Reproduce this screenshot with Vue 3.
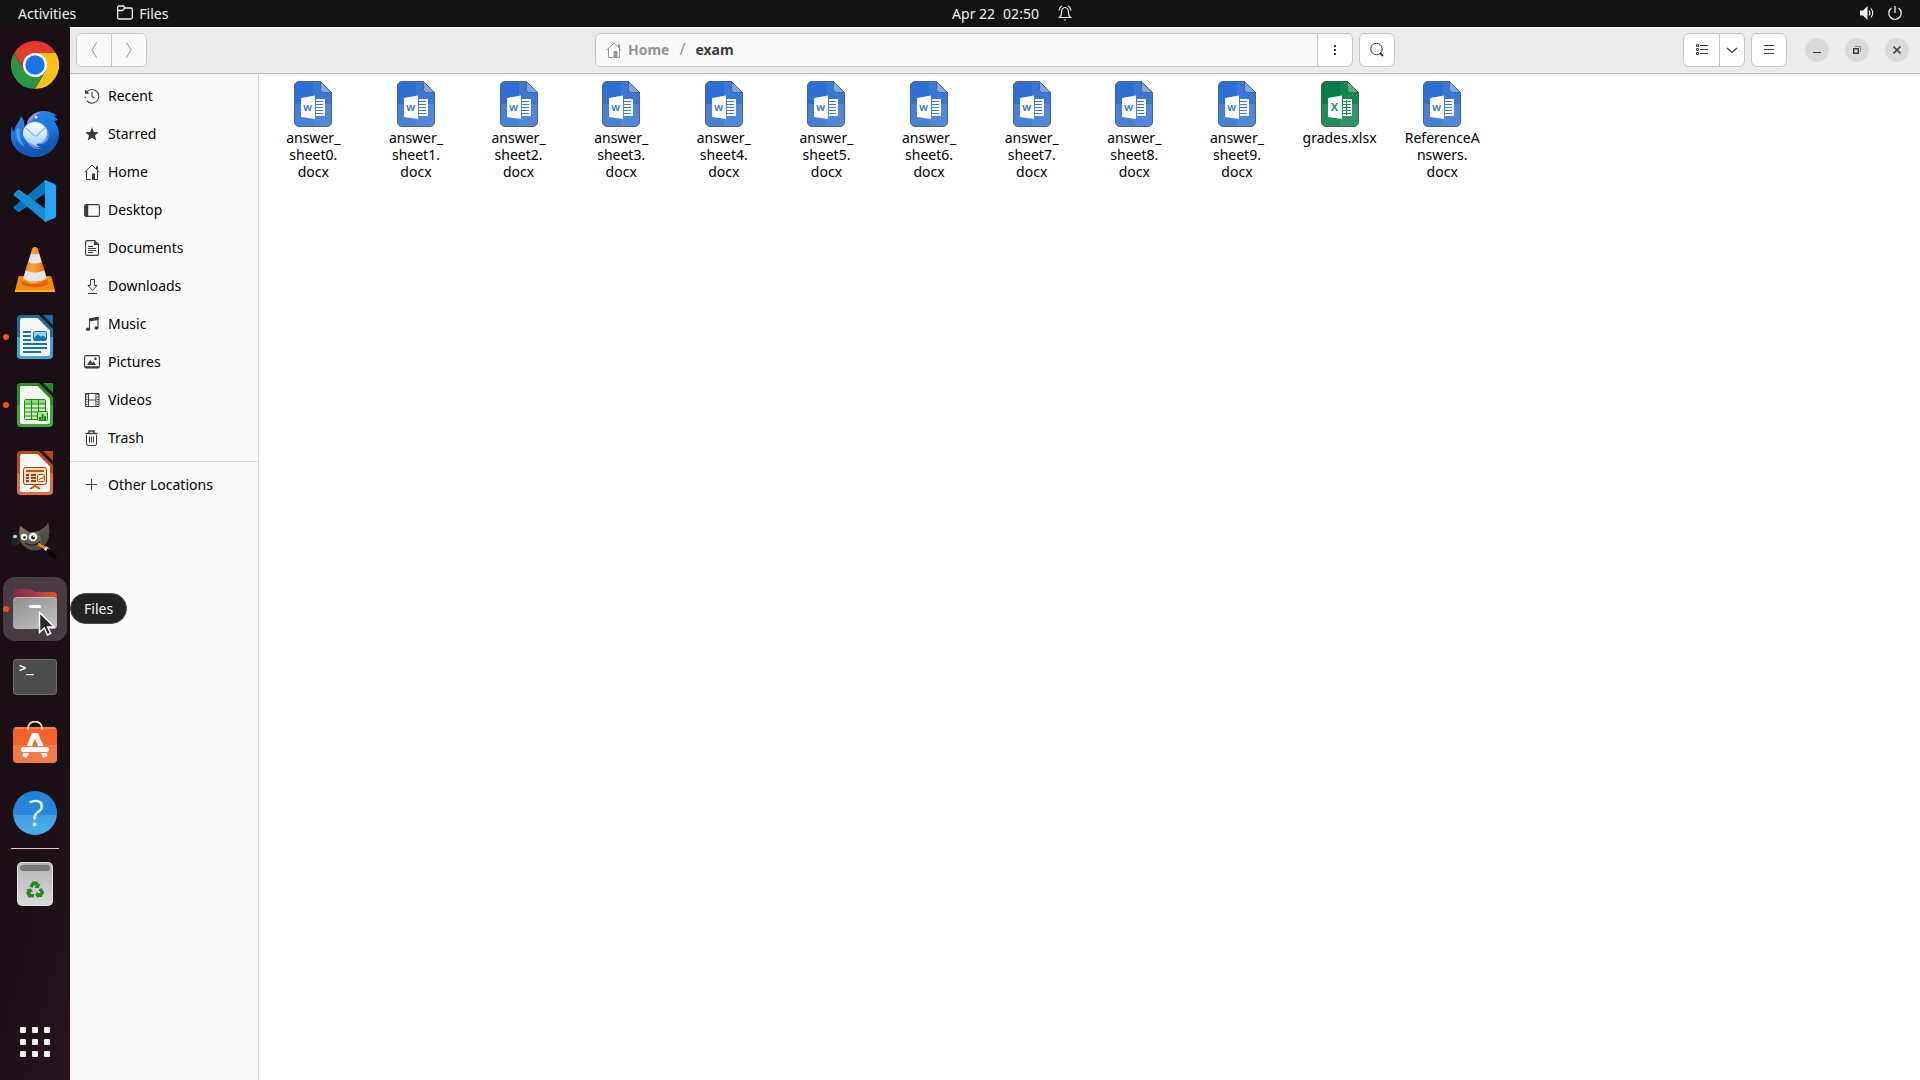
<script setup>
const places = [
  { name: 'Recent', icon: '<path d="M2.6 4.2A6.8 6.8 0 1 1 1.2 8.600" fill="none" stroke="currentColor" stroke-width="1.1" stroke-dasharray="33 3"/><path d="M1 1.500v4.300h4.300z" fill="currentColor"/><path d="M8 4v4.500l2.300 1.800" fill="none" stroke="currentColor" stroke-width="1.100"/>' },
  { name: 'Starred', icon: '<path d="M8 1.200l1.900 4.700 5 .3-3.900 3.200 1.300 5L8 11.700l-4.300 2.700 1.300-5L1.100 6.200l5-.3z" fill="currentColor"/>' },
  { name: 'Home', icon: '<path d="M.6 8.200L8 1l7.400 7.200M2.500 7v8.500h4.200M9.500 15.500h4V7M12.500 5V2.500h1V6" fill="none" stroke="currentColor"/><path d="M8 9.500h3V16H8z" fill="currentColor"/>' },
  { name: 'Desktop', icon: '<rect x=".6" y="2.600" width="14.800" height="11.800" rx="1.500" fill="none" stroke="currentColor" stroke-width="1.100"/><path d="M1 3h3.200v11H1z" fill="currentColor"/>' },
  { name: 'Documents', icon: '<path d="M3 .6h7.500l4 4V14a1.400 1.400 0 0 1-1.400 1.400H3A1.400 1.400 0 0 1 1.600 14V2A1.400 1.400 0 0 1 3 .6z" fill="none" stroke="currentColor" stroke-width="1.100"/><path d="M10 .5V5h4.500z" fill="currentColor"/><path d="M4 6.500h5M4 8.500h8M4 10.500h8M4 12.500h5" stroke="currentColor"/>' },
  { name: 'Downloads', icon: '<path d="M6.500 1.500h4v6H13L8.500 12.300 4 7.500h2.500zM4 15.500h9" fill="none" stroke="currentColor"/>' },
  { name: 'Music', icon: '<path d="M5.500 13V3.200L14 1.500v10.200" fill="none" stroke="currentColor" stroke-width="1.100"/><path d="M5 2.600L14.500 1v3L5 5.600z" fill="currentColor"/><ellipse cx="4" cy="13.300" rx="2.100" ry="1.800" fill="currentColor"/><ellipse cx="12.500" cy="12" rx="2.100" ry="1.800" fill="currentColor"/>' },
  { name: 'Pictures', icon: '<rect x=".6" y="1.600" width="14.800" height="12.300" rx="1.500" fill="none" stroke="currentColor" stroke-width="1.100"/><path d="M1 12.200h14V14H1zM3 11l3.200-5 2 3 1.500-1.500L12 11z" fill="currentColor"/><circle cx="11.500" cy="4.800" r="1.300" fill="currentColor"/>' },
  { name: 'Videos', icon: '<path d="M1.500 1.500h13.500v13H1.500zM4.500 1.500v13M12 1.500v13M4.500 8H12" fill="none" stroke="currentColor"/><path d="M2.500 2v12M14 2v12" stroke="currentColor" stroke-width="2" stroke-dasharray="1 1.500"/>' },
  { name: 'Trash', icon: '<path d="M1.500 3.500h12M5 3V1h5v2" fill="none" stroke="currentColor" stroke-width="1.400"/><path d="M2.500 5v9a1.500 1.500 0 0 0 1.500 1.500h7a1.500 1.500 0 0 0 1.500-1.500V5M5.500 6.500v6M7.500 6.500v6M9.500 6.500v6" fill="none" stroke="currentColor"/>' }
]

const files = [
  ...Array.from({ length: 10 }, (_, i) => ({ kind: 'word', lines: ['answer_', `sheet${i}.`, 'docx'] })),
  { kind: 'excel', lines: ['grades.xlsx'] },
  { kind: 'word', lines: ['ReferenceA', 'nswers.', 'docx'] }
]

const office = (id, dark, light, content) => `
  <defs><linearGradient id="${id}" x2="0" y2="1"><stop offset=".5" stop-color="${dark}"/><stop offset=".5" stop-color="${light}"/></linearGradient></defs>
  <path d="M10 2h18l14 14v26a4 4 0 0 1-4 4H10a4 4 0 0 1-4-4V6a4 4 0 0 1 4-4z" fill="url(#${id})"/>
  <path d="M11 5h15.500L39 17.500V41a2 2 0 0 1-2 2H11a2 2 0 0 1-2-2V7a2 2 0 0 1 2-2z" fill="#f8f8f8"/>
  <path d="M32 2h9a1 1 0 0 1 1 1v9z" fill="${dark}"/>${content}`

const apps = [
  { name: 'Google Chrome', art: `
    <path d="M3.200 12A24 24 0 0 1 44.800 12H24L13.600 30z" fill="#e33b2e"/>
    <path d="M44.800 12A24 24 0 0 1 24 48L34.400 30 24 12z" fill="#fcc21b"/>
    <path d="M24 48A24 24 0 0 1 3.200 12L13.600 30h20.800z" fill="#2a9644"/>
    <circle cx="24" cy="24" r="12" fill="#fff"/><circle cx="24" cy="24" r="9.700" fill="#1a73e8"/>` },
  { name: 'Thunderbird', art: `
    <defs><linearGradient id="tb" x2=".3" y2="1"><stop offset="0" stop-color="#2a8df0"/><stop offset=".6" stop-color="#1a75dc"/><stop offset="1" stop-color="#0f4fa8"/></linearGradient>
    <linearGradient id="tbm" x2="0" y2="1"><stop offset="0" stop-color="#fff"/><stop offset="1" stop-color="#a9d8fb"/></linearGradient></defs>
    <path d="M1 17c0 3 1 5 2 6 1-7 5-9 7-16 3 4 4 7 3 11l3-3c2-7 7-13 17-13 6 0 9 3 13 4l-3 1 4 4-4 1c3 4 5 8 5 13 0 12-10 23-24 23S0 38 0 27c0-4 0-7 1-10z" fill="url(#tb)"/>
    <path d="M5 31c5 10 20 13 32 6 6-3 9-9 10-15 2 13-8 26-23 26C13 48 5 41 5 31z" fill="#1559b8" opacity=".7"/>
    <path d="M16 13c2-5 7-10 15-10-4 1-7 3-9 7l-5 5z" fill="#9c87e8"/>
    <path d="M6 19c-2 8 1 15 8 19-5-7-6-12-5-18z" fill="#49a8fa"/>
    <path d="M34 17c6 6 5 17-4 18l-9-1c3 5 7 5 10 5-7 3-13-2-16-8z" fill="#7d8cf0"/>
    <ellipse cx="24" cy="24" rx="12" ry="11" fill="url(#tbm)"/>
    <path d="M17 30c3 5 7 8 12 8-3-1-4-3-4-5z" fill="#b8dcff"/>
    <path d="M15 19l8 7.500q1.500 1 3 0L34 19" fill="none" stroke="#8dbbe8" stroke-width="1.300"/>
    <circle cx="25" cy="8" r="1.500" fill="#eaf6ff"/>` },
  { name: 'Visual Studio Code', art: `
    <path d="M3 29.500L34.500 3v13L9 34.500a2 2 0 0 1-2.500 0L3.300 31.500a1.500 1.500 0 0 1-.3-2z" fill="#0873b8"/>
    <path d="M3 18.500L34.500 45V32L9 13.300a2 2 0 0 0-2.500 0l-3.200 3a1.500 1.500 0 0 0-.3 2.200z" fill="#148fd8"/>
    <path d="M34.500 3L44 7.200a2 2 0 0 1 1 1.700v30a2 2 0 0 1-1 1.800L34.500 45l-2-1.500 1.500-1V5.500l-1.500-1z" fill="#25a5f2"/>` },
  { name: 'VLC', art: `
    <defs><linearGradient id="vlc"><stop offset="0" stop-color="#f07d08"/><stop offset=".4" stop-color="#ffa13d"/><stop offset="1" stop-color="#df6500"/></linearGradient></defs>
    <path d="M9 31h30a1.500 1.500 0 0 1 1.500 1L44 45.500q.3 1.500-1 1.500H5q-1.300 0-1-1.500L7.500 32A1.500 1.500 0 0 1 9 31z" fill="#f98a05"/>
    <path d="M4 45h40v2H4z" fill="#ffac25"/>
    <path d="M21.500 3q2.500-2 5 0L37.500 38c-5 5-22 5-27 0z" fill="url(#vlc)"/>
    <path d="M20 8.500q4 2 8 0l2.700 8.500q-6.700 3-13.400 0z" fill="#e3e5e6"/>
    <path d="M14.800 25.500q9.200 4 18.400 0l2.600 8c-5 4-18.600 4-23.600 0z" fill="#e3e5e6"/>
    <path d="M12 36c5 4 19 4 24 0l1.500 2.500c-5 5-22 5-27 0z" fill="#d96200"/>` },
  { name: 'LibreOffice Writer', running: true, art: office('wr', '#1a6ea5', '#42a3d8', `
    <path d="M12 19h8M12 23h8M12 27h8M12 31h24M12 35h24M12 39h18" stroke="#0f76b8" stroke-width="2"/>
    <rect x="22.500" y="18.500" width="13" height="9" rx="1.500" fill="#9cd3f5" stroke="#0f76b8"/>
    <path d="M23 27v-2l4-4 3 3 2-1.500 3 2.500v2z" fill="#0f76b8"/>`) },
  { name: 'LibreOffice Calc', running: true, art: office('ca', '#249020', '#40ac2c', `
    <rect x="13.500" y="18.500" width="21" height="20" rx="1" fill="#c9f0b8" stroke="#1f8a1c"/>
    <path d="M14 19h20v4H14z" fill="#8fdd72"/><path d="M13 23h22M13 27h22M13 31h22M13 35h22M20.500 18v21M27.500 18v21" stroke="#1f8a1c"/>
    <rect x="26.500" y="30.500" width="10" height="9" rx="1" fill="#a9e890" stroke="#1f8a1c"/>
    <path d="M29 39v-3M31.500 39v-6M34 39v-4" stroke="#1f8a1c" stroke-width="2"/>`) },
  { name: 'LibreOffice Impress', running: false, art: office('im', '#bd4a10', '#e07036', `
    <rect x="12.500" y="18.500" width="23" height="17" rx="2" fill="#fbdcc4" stroke="#9c4210"/>
    <path d="M15 22h18M24 35v3M24 37l-5 3M24 37l5 3" stroke="#c1500f" stroke-width="1.800"/>
    <path d="M15 26h3M15 29h3M15 32h3M20 26h5M20 29h5M20 32h5" stroke="#9c4210" stroke-width="2"/>
    <rect x="26.500" y="25.500" width="7" height="7" rx="1" fill="#fff3e8" stroke="#c1500f"/><path d="M28 31l2-2 1 1 2-3" fill="none" stroke="#c1500f"/>`) },
  { name: 'GIMP', art: `
    <defs><linearGradient id="gi" x2="0" y2="1"><stop offset="0" stop-color="#8a8370"/><stop offset="1" stop-color="#4a463b"/></linearGradient></defs>
    <path d="M9 9l9 6c8 1 15-2 19-9 3 10 1 21-9 27-7 2-14-1-19-9-1-5-1-10 0-15z" fill="url(#gi)"/>
    <path d="M37 6c3 10 1 20-7 26 2-7 1-13-4-16 5-1 8-4 11-10z" fill="#3d433f" opacity=".65"/>
    <path d="M14 26q8 5 15-1" fill="none" stroke="#26231d" stroke-width="1.300"/>
    <ellipse cx="4.800" cy="22.500" rx="4.500" ry="6" fill="#1d252b"/><ellipse cx="4" cy="19.500" rx="2" ry="1.700" fill="#c7d4dc"/>
    <circle cx="13" cy="20" r="3.300" fill="#f3f3f1"/><circle cx="22" cy="20" r="4.300" fill="#f3f3f1"/>
    <circle cx="13.500" cy="20.500" r="1.300" fill="#111"/><circle cx="22" cy="20.500" r="1.900" fill="#111"/><circle cx="22.700" cy="19.500" r=".8" fill="#fff"/>
    <path d="M27 27l9 5" stroke="#e48a20" stroke-width="3"/><path d="M34 31l4 2.500" stroke="#ddd" stroke-width="4"/><path d="M37 31l6 4c2 2 2 5 3 8-3-2-6-3-8-5l-3-4z" fill="#050505"/>` },
  { name: 'Files', running: true, active: true, art: `
    <defs><linearGradient id="fo"><stop offset="0" stop-color="#80294f"/><stop offset=".5" stop-color="#a93c42"/><stop offset="1" stop-color="#e95420"/></linearGradient>
    <linearGradient id="ff" x2=".7" y2="1"><stop offset="0" stop-color="#8f8f8f"/><stop offset="1" stop-color="#bcbcbc"/></linearGradient></defs>
    <path d="M6 4h12q2 0 3.500 1.500T25 7h17a4 4 0 0 1 4 4v10H2V8a4 4 0 0 1 4-4z" fill="url(#fo)"/>
    <rect x="2" y="12" width="44" height="32" rx="4" fill="url(#ff)"/>
    <path d="M3 16q0-3.500 3-3.500h36q3 0 3 3.500" fill="none" stroke="#bbb"/>
    <rect x="18" y="20" width="12" height="3" rx="1.500" fill="#fff"/>` },
  { name: 'Terminal', art: `
    <rect x="2" y="6" width="44" height="36" rx="4" fill="#6e6e6e"/><rect x="3" y="7" width="42" height="34" rx="3" fill="#4d4d4d"/>
    <text x="8" y="19" font-family="DejaVu Sans Mono, monospace" font-weight="bold" font-size="12" fill="#f4f4f4">&gt;_</text>` },
  { name: 'Ubuntu Software', art: `
    <defs><linearGradient id="us" x2="0" y2="1"><stop offset=".5" stop-color="#f2622a"/><stop offset=".5" stop-color="#f37c46"/></linearGradient></defs>
    <rect x="2" y="6" width="44" height="36" rx="4" fill="url(#us)"/><path d="M4 7h40" stroke="#f9a07a"/>
    <path d="M17 9V7a7 6.500 0 0 1 14 0v2" fill="none" stroke="#f8d9a0" stroke-width="1.800"/>
    <path d="M13.500 36L23 14M34.500 36L25 14" stroke="#fff" stroke-width="5"/><path d="M21 12h6l1 3h-8z" fill="#fff"/>
    <path d="M12.500 28.500h23" stroke="#f37c46" stroke-width="7"/><path d="M12.500 28.500h23" stroke="#fff" stroke-width="5" stroke-linecap="round"/>` },
  { name: 'Help', art: `
    <defs><linearGradient id="he" x2="0" y2="1"><stop offset="0" stop-color="#1f82d8"/><stop offset=".54" stop-color="#2989dc"/><stop offset=".54" stop-color="#409de2"/><stop offset="1" stop-color="#4dafea"/></linearGradient></defs>
    <circle cx="24" cy="24" r="22" fill="url(#he)"/>
    <text x="25" y="37" text-anchor="middle" font-family="Open Sans, Noto Sans, sans-serif" font-weight="300" font-size="36" fill="#fff" stroke="#fff" stroke-width=".5">?</text>` }
]

const trashArt = `
  <defs><linearGradient id="tr" x2="0" y2="1"><stop offset="0" stop-color="#b5b5b5"/><stop offset="1" stop-color="#d8d8d8"/></linearGradient></defs>
  <rect x="6" y="2" width="36" height="44" rx="5" fill="#e0e0e0"/><rect x="7" y="3" width="34" height="42" rx="4" fill="url(#tr)"/>
  <rect x="9" y="5" width="30" height="6" rx="3" fill="#777"/>
  <g fill="#26891e"><g id="arm"><path d="M18.500 26l2.700-4.500h5l1.800 3 1.600-1-1.800 4.500h-4.500l1.500-1-1.500-2.500-2 3.500z"/></g>
  <use href="#arm" transform="rotate(120 24 30.500)"/><use href="#arm" transform="rotate(240 24 30.500)"/></g>`
</script>

<template>
  <div class="screen">
    <header class="topbar">
      <div class="top-left">
        <button class="top-item">Activities</button>
        <button class="top-item app-menu">
          <svg width="16" height="16" viewBox="0 0 16 16" fill="none" stroke="currentColor" stroke-width="1.300"><path d="M.7 12.500v-10Q.7 1 2.200 1h4.300L8 3h5.800q1.500 0 1.500 1.500v8q0 1.500-1.500 1.500H2.200Q.7 14 .7 12.500zM.7 5.500h4.800L8 3" /></svg>
          Files
        </button>
      </div>
      <button class="top-item clock">
        <span>Apr 22</span><span class="time">02:50</span>
        <svg width="16" height="16" viewBox="0 0 16 16" fill="none" stroke="currentColor" stroke-width="1.200"><path d="M2.500 12.500c1.500-1 2-2 2-4.500 0-3.500 1-5.500 3.500-5.500s3.500 2 3.500 5.500c0 2.500.5 3.500 2 4.500z" /><path d="M2 5.500Q2.500 2 5 .8M14 5.500Q13.500 2 11 .8M7 15h2" /></svg>
      </button>
      <div class="top-right">
        <svg width="16" height="16" viewBox="0 0 16 16"><path d="M1 5.500h3L8.500 1v14L4 10.500H1z" fill="currentColor" /><path d="M10 5.500q1.800 2.500 0 5M12 3.500q3.500 4.500 0 9" fill="none" stroke="currentColor" stroke-width="1.200" /></svg>
        <svg width="16" height="16" viewBox="0 0 16 16" fill="none" stroke="currentColor" stroke-width="1.300"><path d="M4.500 3A6.200 6.200 0 1 0 11.500 3M8 1v7" /></svg>
      </div>
    </header>

    <div class="workspace">
      <nav class="dock" aria-label="Dock">
        <button v-for="app in apps" :key="app.name" class="tile" :class="{ active: app.active }" :aria-label="app.name">
          <i v-if="app.running" class="dot"></i>
          <svg width="48" height="48" viewBox="0 0 48 48" v-html="app.art"></svg>
          <template v-if="app.active">
            <span class="tooltip">Files</span>
            <svg class="cursor" width="18" height="26" viewBox="0 0 18 26"><path d="M1.500 1.500v20l4.800-4.500 3.200 7 3.200-1.500-3-6.500h6.500z" fill="#2b2b2b" stroke="#fff" stroke-width="1.500" /></svg>
          </template>
        </button>
        <hr class="dock-rule" />
        <button class="tile" aria-label="Trash"><svg width="48" height="48" viewBox="0 0 48 48" v-html="trashArt"></svg></button>
        <button class="tile grid-tile" aria-label="Show Applications">
          <span class="app-grid"><i v-for="n in 9" :key="n"></i></span>
        </button>
      </nav>

      <main class="window">
        <header class="headerbar">
          <div class="linked">
            <button class="btn dim back" aria-label="Back"><svg width="16" height="16" viewBox="0 0 16 16"><path d="M10.500.5L6 8l4.500 7.500" /></svg></button>
            <button class="btn dim" aria-label="Forward"><svg width="16" height="16" viewBox="0 0 16 16"><path d="M5.500.5L10 8l-4.500 7.500" /></svg></button>
          </div>
          <div class="location">
            <div class="linked path">
              <div class="crumbs">
                <a href="#home" class="crumb">
                  <svg width="16" height="16" viewBox="0 0 16 16" v-html="places[2].icon"></svg><span class="caption">Home</span>
                </a>
                <span class="slash caption">/</span>
                <a href="#exam" class="crumb current"><span class="caption">exam</span></a>
              </div>
              <button class="btn" aria-label="Folder menu"><svg width="16" height="16" viewBox="0 0 16 16"><path class="solid" d="M7 3h2v2H7zM7 7h2v2H7zM7 11h2v2H7z" /></svg></button>
            </div>
            <button class="btn single" aria-label="Search"><svg width="16" height="16" viewBox="0 0 16 16"><circle cx="7.500" cy="7" r="5.700" /><path d="M11 11l3 3" stroke-width="2" /></svg></button>
          </div>
          <div class="controls">
            <div class="linked">
              <button class="btn" aria-label="List view"><svg width="16" height="16" viewBox="0 0 16 16"><path d="M2.500 2.500h2v2h-2zM2.500 6.500h2v2h-2zM2.500 10.500h2v2h-2zM6 3.500h8M6 7.500h8M6 11.500h8" /></svg></button>
              <button class="btn narrow" aria-label="View options"><svg width="16" height="16" viewBox="0 0 16 16"><path d="M3 6l5 4.500L13 6" stroke-width="1.300" /></svg></button>
            </div>
            <button class="btn single" aria-label="Menu"><svg width="16" height="16" viewBox="0 0 16 16"><path d="M3 3.500h10M3 7.500h10M3 11.500h10" /></svg></button>
            <div class="win-buttons">
              <button aria-label="Minimize"><svg width="16" height="16" viewBox="0 0 16 16"><path d="M4 10.500h8" /></svg></button>
              <button aria-label="Restore"><svg width="16" height="16" viewBox="0 0 16 16"><path d="M4.700 6.700h4.600v4.600H4.700z" stroke-width="1.400" /><path d="M6 4.500h5.500V10" opacity=".5" /></svg></button>
              <button aria-label="Close"><svg width="16" height="16" viewBox="0 0 16 16"><path d="M4.500 4.500l7 7M11.500 4.500l-7 7" stroke-width="1.600" /></svg></button>
            </div>
          </div>
        </header>

        <div class="body">
          <aside class="sidebar">
            <a v-for="place in places" :key="place.name" class="place" href="#place">
              <svg width="16" height="16" viewBox="0 0 16 16" v-html="place.icon"></svg><span class="caption">{{ place.name }}</span>
            </a>
            <hr />
            <a class="place" href="#other">
              <svg width="16" height="16" viewBox="0 0 16 16"><path d="M2 7.500h11M7.500 2v11" stroke="currentColor" /></svg><span class="caption">Other Locations</span>
            </a>
          </aside>

          <ul class="files">
            <li v-for="file in files" :key="file.lines.join('')">
              <button class="file" :class="file.kind">
                <svg width="38" height="46" viewBox="0 0 38 46">
                  <path class="page" d="M5 .5h21.500l11 11V41a4.500 4.500 0 0 1-4.500 4.500H5A4.500 4.500 0 0 1 .5 41V5A4.500 4.500 0 0 1 5 .5z" />
                  <path d="M19 1h7.500L37 11.500V41a4 4 0 0 1-4 4H19z" fill="#fff" opacity=".06" />
                  <path d="M1 23h36v18a4 4 0 0 1-4 4H5a4 4 0 0 1-4-4z" fill="#fff" opacity=".12" />
                  <path class="fold" d="M26.500.5l11 11h-8a3 3 0 0 1-3-3z" />
                  <path d="M7 17l14-2.500v23.500L7 36zM22 18h9v17h-9z" fill="#fff" />
                  <path v-if="file.kind === 'word'" class="rule" d="M22 20.500h7M22 23.500h7M22 26.500h7M22 29.500h7M22 32.500h7" />
                  <path v-else class="rule" d="M22 20.500h8M22 23.500h8M22 26.500h8M22 29.500h8M22 32.500h8M25.500 19v15" />
                  <text x="13.500" y="30" text-anchor="middle" font-family="Open Sans, sans-serif" font-weight="bold" :font-size="file.kind === 'word' ? 9 : 11">{{ file.kind === 'word' ? 'W' : 'X' }}</text>
                </svg>
                <span class="label"><span v-for="line in file.lines" :key="line">{{ line }}</span></span>
              </button>
            </li>
          </ul>
        </div>
      </main>
    </div>
  </div>
</template>

<style>
body {
  margin: 0;
}
</style>

<style scoped>
.screen {
  min-height: 100vh;
  display: flex;
  flex-direction: column;
  font: 14px/17px "Noto Sans", sans-serif;
  color: #000;
}
button {
  font: inherit;
  color: inherit;
  background: none;
  border: 0;
  padding: 0;
  margin: 0;
}
a {
  color: inherit;
  text-decoration: none;
}
svg {
  display: block;
  flex: none;
}
.caption {
  padding-bottom: 2px;
}
.topbar {
  display: flex;
  align-items: center;
  box-sizing: border-box;
  height: 27px;
  padding-bottom: 1px;
  background: #131313;
  color: #f0f0f0;
}
.top-left,
.top-right {
  flex: 1;
  display: flex;
  align-items: center;
}
.top-left {
  gap: 41px;
  padding-left: 18px;
}
.top-right {
  justify-content: flex-end;
  gap: 12px;
  padding-right: 17px;
}
.top-item {
  display: flex;
  align-items: center;
  gap: 6px;
}
.clock {
  gap: 8px;
  padding-left: 104px;
}
.time {
  margin-right: 10px;
}
.workspace {
  flex: 1;
  display: flex;
}
.dock {
  width: 70px;
  flex: none;
  box-sizing: border-box;
  padding: 6px 0;
  display: flex;
  flex-direction: column;
  align-items: center;
  gap: 4px;
  background: linear-gradient(105deg, #190e14 0%, #1d1117 75%, #27141f 100%);
}
.tile {
  position: relative;
  width: 64px;
  height: 64px;
  flex: none;
  display: flex;
  align-items: center;
  justify-content: center;
  border-radius: 12px;
}
.tile.active {
  background: #473c43;
  z-index: 1;
}
.dot {
  position: absolute;
  left: 0;
  top: 29px;
  width: 6px;
  height: 6px;
  border-radius: 50%;
  background: #e95420;
}
.tooltip {
  position: absolute;
  left: 67px;
  top: 16px;
  padding: 6px 13px;
  border: 1px solid #4c4c4c;
  border-radius: 16px;
  background: #232323;
  color: #f0f0f0;
}
.cursor {
  position: absolute;
  left: 35px;
  top: 34px;
}
.dock-rule {
  width: 48px;
  height: 1px;
  margin: -1px 0;
  border: 0;
  background: #d5cfd2;
}
.grid-tile {
  margin-top: auto;
}
.app-grid {
  display: grid;
  grid-template-columns: repeat(3, 6px);
  gap: 6px;
}
.app-grid i {
  height: 6px;
  border-radius: 1px;
  background: #f2f0f0;
}
.window {
  flex: 1;
  min-width: 0;
  display: flex;
  flex-direction: column;
  background: #fff;
}
.headerbar {
  display: grid;
  grid-template-columns: 1fr minmax(0, 800px) 1fr;
  align-items: center;
  padding: 5px 6px 6px;
  border-top: 1px solid #f9f9f9;
  border-bottom: 1px solid #bebebe;
  background: #ebebeb;
  color: #3d3d3d;
}
.headerbar svg {
  fill: none;
  stroke: currentColor;
}
.headerbar .solid {
  fill: currentColor;
  stroke: none;
}
.linked {
  display: flex;
  justify-self: start;
  border: 1px solid #c4c4c4;
  border-radius: 6px;
  background: #fff;
  overflow: hidden;
}
.btn {
  width: 35px;
  height: 32px;
  display: flex;
  align-items: center;
  justify-content: center;
}
.btn + .btn,
.crumbs + .btn {
  border-left: 1px solid #c4c4c4;
}
.btn.dim {
  background: #fafafa;
  color: #929595;
}
.btn.back {
  width: 34px;
}
.btn.narrow {
  width: 25px;
}
.btn.single {
  width: 36px;
  height: 34px;
  border: 1px solid #c4c4c4;
  border-radius: 6px;
  background: #fff;
}
.location,
.controls {
  display: flex;
  gap: 6px;
}
.path {
  flex: 1;
}
.crumbs {
  flex: 1;
  display: flex;
  align-items: center;
  gap: 10px;
  padding-left: 10px;
  background: #fafafa;
  font-weight: 700;
}
.crumb {
  display: flex;
  align-items: center;
  gap: 6px;
  color: #929595;
}
.crumb.current {
  color: #3d3d3d;
}
.slash {
  color: #929595;
  font-size: 16px;
  font-weight: 400;
}
.controls {
  justify-self: end;
  align-items: center;
  padding-right: 5px;
}
.win-buttons {
  display: flex;
  gap: 16px;
  padding-left: 12px;
}
.win-buttons button {
  width: 24px;
  height: 24px;
  display: flex;
  align-items: center;
  justify-content: center;
  border-radius: 50%;
  background: #dadada;
}
.body {
  flex: 1;
  display: flex;
}
.sidebar {
  width: 188px;
  flex: none;
  padding-top: 3px;
  border-right: 1px solid #d5d5d5;
  background: #fafafa;
}
.sidebar hr {
  height: 1px;
  margin: 4px 0;
  border: 0;
  background: #dadada;
}
.place {
  display: flex;
  align-items: center;
  gap: 8px;
  height: 38px;
  padding-left: 14px;
}
.place svg {
  color: #3d3d3d;
  fill: none;
}
.files {
  flex: 1;
  display: grid;
  grid-template-columns: repeat(auto-fill, minmax(100px, 1fr));
  align-content: start;
  margin: 0;
  padding: 7px 16px 0 3px;
  list-style: none;
}
.file {
  width: 100%;
  display: flex;
  flex-direction: column;
  align-items: center;
  gap: 2px;
}
.label {
  display: flex;
  flex-direction: column;
  align-items: center;
}
.word .page {
  fill: #2f6fd3;
  stroke: #4a6591;
}
.word .fold {
  fill: #7ea6e6;
  stroke: #4a6591;
}
.word .rule {
  stroke: #3c78d8;
}
.word text {
  fill: #3c78d8;
}
.excel .page {
  fill: #067f45;
  stroke: #3c6a55;
}
.excel .fold {
  fill: #57b183;
  stroke: #3c6a55;
}
.excel .rule {
  stroke: #129158;
}
.excel text {
  fill: #129158;
}
</style>
